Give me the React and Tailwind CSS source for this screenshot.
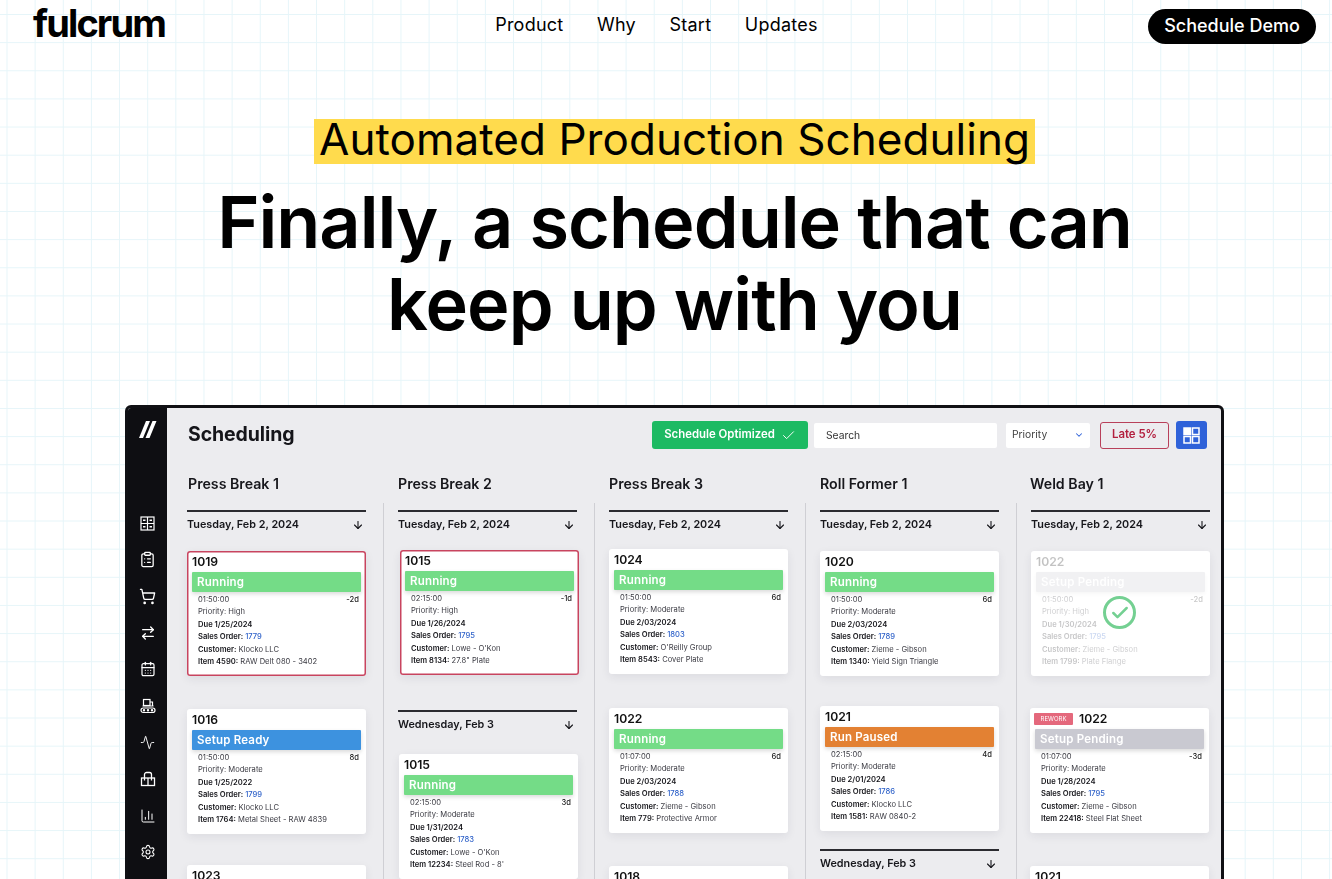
import React from 'react';
import { ClipboardList, ShoppingCart, ArrowRightLeft, CalendarDays, Activity, ChartColumn, Settings, ArrowDown, Check, ChevronDown } from 'lucide-react';

function TableIcon() {
  return (
    <svg width="15" height="15" viewBox="0 0 15 15" fill="none" stroke="currentColor" strokeWidth="1.2">
      <rect x="1" y="1" width="13" height="13" />
      <path d="M7.5 1v13M1 7.5h13" />
      <path d="M3 4.2h2.5M9.5 4.2H12M3 10.8h2.5M9.5 10.8H12" strokeWidth="1.5" />
    </svg>
  );
}

function MachineIcon() {
  return (
    <svg width="16" height="16" viewBox="0 0 16 16" fill="none" stroke="currentColor" strokeWidth="1.2">
      <rect x="3.5" y="1.5" width="6.5" height="6" />
      <path d="M10 4h2.5v4" />
      <path d="M2.5 8h11" />
      <rect x="1" y="10" width="14" height="4.5" rx="2.2" />
      <circle cx="4" cy="12.2" r="0.6" />
      <circle cx="8" cy="12.2" r="0.6" />
      <circle cx="12" cy="12.2" r="0.6" />
    </svg>
  );
}

function StationIcon() {
  return (
    <svg width="16" height="16" viewBox="0 0 16 16" fill="none" stroke="currentColor" strokeWidth="1.3">
      <rect x="1.5" y="7" width="13" height="7.5" />
      <path d="M8 7v7.5" />
      <path d="M4.5 7V3.5A2 2 0 0 1 6.5 1.5h3a2 2 0 0 1 2 2V7" />
      <path d="M4.5 7v2.5M11.5 7v2.5" />
    </svg>
  );
}

function ViewIcon() {
  return (
    <svg width="17" height="17" viewBox="0 0 17 17" fill="none" stroke="currentColor" strokeWidth="1.5">
      <rect x="1" y="1" width="6.5" height="6.5" fill="currentColor" />
      <rect x="9.5" y="1" width="6.5" height="6.5" />
      <rect x="1" y="9.5" width="6.5" height="6.5" />
      <rect x="9.5" y="9.5" width="6.5" height="6.5" />
    </svg>
  );
}

const sideIcons = [
  <TableIcon />,
  <ClipboardList size={17} strokeWidth={1.8} />,
  <ShoppingCart size={17} strokeWidth={1.8} />,
  <ArrowRightLeft size={16} strokeWidth={2} />,
  <CalendarDays size={16} strokeWidth={1.8} />,
  <MachineIcon />,
  <Activity size={15} strokeWidth={1.5} />,
  <StationIcon />,
  <ChartColumn size={16} strokeWidth={1.5} />,
  <Settings size={16} strokeWidth={1.6} />,
];

const statusColors = {
  'Running': 'bg-[#74dc87]',
  'Setup Ready': 'bg-[#3d92df]',
  'Run Paused': 'bg-[#e38133]',
  'Setup Pending': 'bg-[#c9c9d1]',
};

const columns = [
  {
    title: 'Press Break 1',
    items: [
      { date: 'Tuesday, Feb 2, 2024' },
      { id: '1019', status: 'Running', time: '01:50:00', days: '-2d', priority: 'High', due: '1/25/2024', order: '1779', customer: 'Klocko LLC', item: 'Item 4590', part: 'RAW Delt 080 - 3402', late: true, cls: 'mt-[19px]' },
      { id: '1016', status: 'Setup Ready', time: '01:50:00', days: '8d', priority: 'Moderate', due: '1/25/2022', order: '1799', customer: 'Klocko LLC', item: 'Item 1764', part: 'Metal Sheet - RAW 4839', cls: 'mt-[33px]' },
      { id: '1023', status: 'Running', cls: 'mt-[31px]' },
    ],
  },
  {
    title: 'Press Break 2',
    items: [
      { date: 'Tuesday, Feb 2, 2024' },
      { id: '1015', status: 'Running', time: '02:15:00', days: '-1d', priority: 'High', due: '1/26/2024', order: '1795', customer: "Lowe - O'Kon", item: 'Item 8134', part: '27.8" Plate', late: true, cls: 'mt-[18px] ml-[2px]' },
      { date: 'Wednesday, Feb 3', cls: 'mt-[35px]' },
      { id: '1015', status: 'Running', time: '02:15:00', days: '3d', priority: 'Moderate', due: '1/31/2024', order: '1783', customer: "Lowe - O'Kon", item: 'Item 12234', part: "Steel Rod - 8'", cls: 'mt-[22px] ml-[1px]' },
    ],
  },
  {
    title: 'Press Break 3',
    items: [
      { date: 'Tuesday, Feb 2, 2024' },
      { id: '1024', status: 'Running', time: '01:50:00', days: '6d', priority: 'Moderate', due: '2/03/2024', order: '1803', customer: "O'Reilly Group", item: 'Item 8543', part: 'Cover Plate', cls: 'mt-[17px]' },
      { id: '1022', status: 'Running', time: '01:07:00', days: '6d', priority: 'Moderate', due: '2/03/2024', order: '1788', customer: 'Zieme - Gibson', item: 'Item 779', part: 'Protective Armor', cls: 'mt-[34px]' },
      { id: '1018', status: 'Running', cls: 'mt-[33px]' },
    ],
  },
  {
    title: 'Roll Former 1',
    items: [
      { date: 'Tuesday, Feb 2, 2024' },
      { id: '1020', status: 'Running', time: '01:50:00', days: '6d', priority: 'Moderate', due: '2/03/2024', order: '1789', customer: 'Zieme - Gibson', item: 'Item 1340', part: 'Yield Sign Triangle', cls: 'mt-[19px]' },
      { id: '1021', status: 'Run Paused', time: '02:15:00', days: '4d', priority: 'Moderate', due: '2/01/2024', order: '1786', customer: 'Klocko LLC', item: 'Item 1581', part: 'RAW 0840-2', cls: 'mt-[30px]' },
      { date: 'Wednesday, Feb 3', cls: 'mt-[18px]' },
    ],
  },
  {
    title: 'Weld Bay 1',
    items: [
      { date: 'Tuesday, Feb 2, 2024' },
      { id: '1022', status: 'Setup Pending', time: '01:50:00', days: '-2d', priority: 'High', due: '1/30/2024', order: '1795', customer: 'Zieme - Gibson', item: 'Item 1799', part: 'Plate Flange', faded: true, cls: 'mt-[19px]' },
      { id: '1022', rework: true, status: 'Setup Pending', time: '01:07:00', days: '-3d', priority: 'Moderate', due: '1/28/2024', order: '1795', customer: 'Zieme - Gibson', item: 'Item 22418', part: 'Steel Flat Sheet', cls: 'mt-[32px] -ml-[1px]' },
      { id: '1021', status: 'Running', cls: 'mt-[33px] -ml-[1px]' },
    ],
  },
];

function DateHeader({ label, cls }) {
  return (
    <div className={`w-[179px] border-t-2 border-[#2b2b30] pt-[6px] flex items-center justify-between pr-[2px] ${cls || ''}`}>
      <span className="text-[10.8px] leading-[14px] font-semibold text-[#17171c]">{label}</span>
      <ArrowDown size={12} strokeWidth={2.2} className="text-[#17171c]" />
    </div>
  );
}

function JobCard({ job }) {
  return (
    <div className={`relative w-[179px] h-[125px] shrink-0 bg-white rounded-[3px] px-[5px] shadow-[0_3px_10px_rgba(40,40,60,0.08)] ${job.late ? 'ring-[1.5px] ring-inset ring-[#c8445f]' : ''} ${job.cls || ''}`}>
      <div className={job.faded ? 'opacity-25' : ''}>
        <div className="h-[21px] flex items-center gap-[6px] pt-[1px]">
          {job.rework ? <span className="w-[39px] h-[12px] rounded-[1px] bg-[#e4687c] text-white text-[6px] leading-[12px] text-center -ml-[1px]">REWORK</span> : null}
          <span className="text-[12.2px] font-semibold text-[#111]">{job.id}</span>
        </div>
        <div className={`h-[20px] rounded-[1px] px-[5px] text-[11.5px] leading-[20px] font-semibold tracking-[0.2px] text-white shadow-[0_2px_4px_rgba(0,0,0,0.15)] ${statusColors[job.status]}`}>
          {job.status}
        </div>
        {job.time ? (
          <div className="mt-[2px] pl-[6px] pr-[2px] text-[7.6px] leading-[12.4px] text-[#3a3a42]">
            <div className="flex justify-between">
              <span>{job.time}</span>
              <span className="font-medium text-[#222]">{job.days}</span>
            </div>
            <div>Priority: {job.priority}</div>
            <div className="font-semibold text-[#15151a]">Due {job.due}</div>
            <div className="font-semibold text-[#15151a]">Sales Order: <span className="font-medium text-[#2f62c9]">{job.order}</span></div>
            <div><span className="font-semibold text-[#15151a]">Customer:</span> {job.customer}</div>
            <div><span className="font-semibold text-[#15151a]">{job.item}:</span> {job.part}</div>
          </div>
        ) : null}
      </div>
      {job.faded ? (
        <div className="absolute left-[72px] top-[45px] w-[33px] h-[33px] rounded-full border-[3px] border-[#74d092] flex items-center justify-center">
          <Check size={20} strokeWidth={3} className="text-[#74d092]" />
        </div>
      ) : null}
    </div>
  );
}

function BoardColumn({ column, last, index }) {
  return (
    <div className="w-[211px] shrink-0">
      <div className={`h-[20px] text-[14.2px] leading-[20px] font-semibold text-[#17171c] ${index === 0 ? 'pl-[15px]' : index === 4 ? 'pl-[13px]' : 'pl-[14px]'}`}>{column.title}</div>
      <div className={`mt-[9px] pt-[7px] pl-[14px] h-[460px] overflow-hidden ${last ? '' : 'border-r border-[#cfcfd4]'}`}>
        {column.items.map((item, i) => (
          item.date
            ? <DateHeader key={i} label={item.date} cls={item.cls} />
            : <JobCard key={i} job={item} />
        ))}
      </div>
    </div>
  );
}

export default function App() {
  return (
    <div className="h-screen overflow-hidden bg-white bg-[image:linear-gradient(to_right,#e6f5f9_1px,transparent_1px),linear-gradient(to_bottom,#e6f5f9_1px,transparent_1px)] bg-[size:28.15px_28.15px] bg-[position:6.5px_14px]">
      <div className="w-[1349px] font-['Inter',sans-serif] text-black">
        <header className="h-[50px] pt-[9px] px-[33px] flex items-start justify-between">
          <div className="w-[132px] h-[35px] -mt-[3px] text-[38px] leading-[35px] font-bold tracking-[-1.9px]">fulcrum</div>
          <nav className="flex gap-[33.5px] text-[18px] leading-[32px] tracking-[0.25px]">
            <a>Product</a>
            <a>Why</a>
            <a>Start</a>
            <a>Updates</a>
          </nav>
          <button className="w-[168px] h-[35px] pb-[2px] rounded-full bg-black text-white text-[18px] font-medium">Schedule Demo</button>
        </header>

        <section className="mt-[69px] flex flex-col items-center">
          <div className="h-[45px] w-[721px] bg-[#ffdb4d] text-center text-[44px] leading-[40px] tracking-[0.05px]">Automated Production Scheduling</div>
          <h1 className="mt-[17px] text-center text-[72px] leading-[82px] font-semibold tracking-[-1px]">
            Finally, a schedule that can<br />keep up with you
          </h1>
        </section>

        <div className="mt-[60px] mx-[125px] w-[1099px] h-[520px] border-[3px] border-[#101014] rounded-t-[6px] overflow-hidden flex bg-[#ececef] blur-[0.45px]">
          <aside className="w-[39px] shrink-0 bg-[#0e0e12] text-white flex flex-col items-center pt-[13px]">
            <svg width="18" height="17" viewBox="0 0 18 17" fill="currentColor">
              <polygon points="0,17 4,17 11,0 7,0" />
              <polygon points="6.5,17 10.5,17 17.5,0 13.5,0" />
            </svg>
            <div className="mt-[77px] flex flex-col items-center gap-[20.6px]">
              {sideIcons.map((icon, i) => <div key={i} className="h-[16px] flex items-center justify-center">{icon}</div>)}
            </div>
          </aside>

          <main className="flex-1 min-w-0">
            <div className="h-[28px] mt-[13px] pl-[21px] pr-[14px] flex items-center">
              <h2 className="text-[19.5px] font-bold tracking-[-0.1px] text-[#15151a]">Scheduling</h2>
              <div className="ml-auto flex items-center">
                <div className="w-[156px] h-[28px] rounded-[3px] bg-[#1dba63] text-white text-[11.4px] font-semibold flex items-center justify-center gap-[6px]">
                  Schedule Optimized <Check size={15} strokeWidth={1.5} />
                </div>
                <div className="ml-[6px] w-[183px] h-[25px] rounded-[2px] bg-white pl-[12px] text-[10.3px] leading-[25px] text-[#333]">Search</div>
                <div className="ml-[9px] w-[84px] h-[25px] rounded-[2px] bg-white px-[6px] text-[10.3px] text-[#444] flex items-center justify-between">
                  Priority <ChevronDown size={10} strokeWidth={2.5} className="text-[#2f62d9]" />
                </div>
                <div className="ml-[10px] w-[69px] h-[27px] rounded-[3px] border border-[#b8405a] text-[#b3203f] text-[11.4px] font-semibold flex items-center justify-center">Late 5%</div>
                <div className="ml-[7px] w-[31px] h-[28px] rounded-[3px] bg-[#2f62d9] text-white flex items-center justify-center">
                  <ViewIcon />
                </div>
              </div>
            </div>

            <div className="mt-[25px] pl-[6px] flex">
              {columns.map((column, i) => (
                <BoardColumn key={column.title} column={column} index={i} last={i === columns.length - 1} />
              ))}
            </div>
          </main>
        </div>
      </div>
    </div>
  );
}
